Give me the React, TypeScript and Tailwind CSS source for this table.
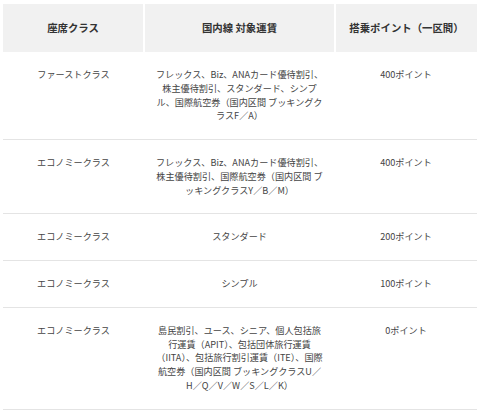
const font = { fontFamily: '"Noto Sans CJK JP", "Noto Sans", sans-serif' }

type Row = { seat: string; fares: string[]; points: string }

const rows: Row[] = [
  {
    seat: 'ファーストクラス',
    fares: [
      'フレックス、Biz、ANAカード優待割引、',
      '株主優待割引、スタンダード、シンプ',
      'ル、国際航空券（国内区間 ブッキングク',
      'ラスF／A）',
    ],
    points: '400ポイント',
  },
  {
    seat: 'エコノミークラス',
    fares: [
      'フレックス、Biz、ANAカード優待割引、',
      '株主優待割引、国際航空券（国内区間 ブ',
      'ッキングクラスY／B／M）',
    ],
    points: '400ポイント',
  },
  { seat: 'エコノミークラス', fares: ['スタンダード'], points: '200ポイント' },
  { seat: 'エコノミークラス', fares: ['シンプル'], points: '100ポイント' },
  {
    seat: 'エコノミークラス',
    fares: [
      '島民割引、ユース、シニア、個人包括旅',
      '行運賃（APIT）、包括団体旅行運賃',
      '（IITA）、包括旅行割引運賃（ITE）、国際',
      '航空券（国内区間 ブッキングクラスU／',
      'H／Q／V／W／S／L／K）',
    ],
    points: '0ポイント',
  },
]

export default function App() {
  return (
    <div className="bg-white w-[480px] h-[418px] pt-[4px] px-[3px]" style={font}>
      <table className="w-full border-collapse table-fixed">
        <colgroup>
          <col className="w-[141px]" />
          <col className="w-[191px]" />
          <col />
        </colgroup>
        <thead>
          <tr className="bg-[#f1f1f1] h-[48px] text-[10.4px] font-bold text-[#333]">
            <th className="border-r-2 border-white">座席クラス</th>
            <th className="border-r-2 border-white">国内線 対象運賃</th>
            <th>搭乗ポイント（一区間）</th>
          </tr>
        </thead>
        <tbody className="text-[9.15px] leading-[13.75px] text-[#444]">
          {rows.map((r, i) => (
            <tr key={i} className="border-b border-[#e4e4e4] align-top">
              <td className="text-center pt-[16px] pb-[16px]">{r.seat}</td>
              <td className="text-center pt-[16px] pb-[16px] px-[6px]">
                {r.fares.map((l, j) => (
                  <span key={j} className="block whitespace-nowrap">{l}</span>
                ))}
              </td>
              <td className="text-center pt-[16px] pb-[16px]">{r.points}</td>
            </tr>
          ))}
        </tbody>
      </table>
    </div>
  )
}
